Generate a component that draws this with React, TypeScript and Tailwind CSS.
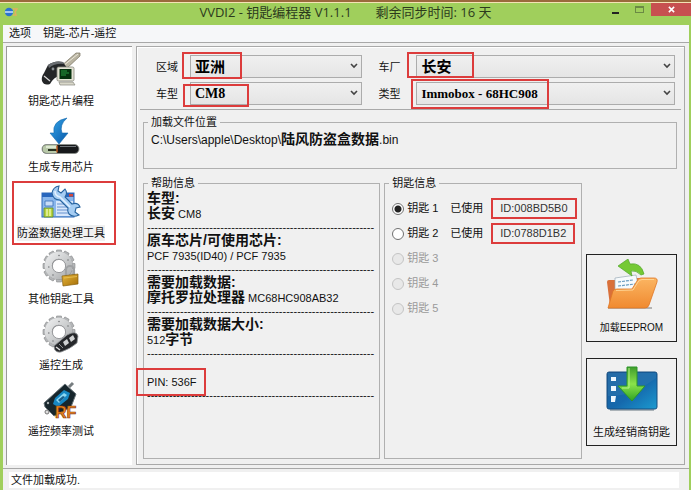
import { useState, type ReactNode } from "react";

const uiFont = "font-['Liberation_Sans','Noto_Sans_CJK_SC',sans-serif]";

function Gear() {
  const teeth = [0, 30, 60, 90, 120, 150, 180, 210, 240, 270, 300, 330];
  return (
    <g>
      <g fill="#b4b6b8" stroke="#888a8c" strokeWidth="0.6">
        {teeth.map((a) => (
          <path key={a} d="M14 5 L14.6 1 L19.4 1 L20 5 Z" transform={`rotate(${a} 17 17)`} />
        ))}
      </g>
      <circle cx="17" cy="17" r="10.3" fill="none" stroke="#8a8c8e" strokeWidth="7.2" />
      <circle cx="16.7" cy="16.7" r="10.4" fill="none" stroke="url(#steel)" strokeWidth="7" />
      <circle cx="17" cy="17" r="6.6" fill="#fff" stroke="#85878a" strokeWidth="0.8" />
      <g fill="#77797b">
        <circle cx="17" cy="6.5" r="0.8" />
        <circle cx="6.8" cy="18" r="0.8" />
        <circle cx="11" cy="26" r="0.8" />
        <circle cx="26" cy="11" r="0.8" />
      </g>
    </g>
  );
}

function SharedPaints() {
  return (
    <svg className="absolute size-0" aria-hidden="true">
      <defs>
        <linearGradient id="steel" x1="0" y1="0" x2="1" y2="1">
          <stop offset="0" stopColor="#e8e9ea" />
          <stop offset="0.5" stopColor="#cdcfd0" />
          <stop offset="1" stopColor="#acaeb0" />
        </linearGradient>
        <linearGradient id="blueArrow" x1="0" y1="0" x2="1" y2="1">
          <stop offset="0" stopColor="#35a7ea" />
          <stop offset="1" stopColor="#0757a8" />
        </linearGradient>
        <linearGradient id="orange" x1="0" y1="0" x2="0" y2="1">
          <stop offset="0" stopColor="#fbb562" />
          <stop offset="1" stopColor="#f08a30" />
        </linearGradient>
        <linearGradient id="green" x1="0" y1="0" x2="0" y2="1">
          <stop offset="0" stopColor="#3f9c2c" />
          <stop offset="0.5" stopColor="#8ae24a" />
          <stop offset="1" stopColor="#2fa324" />
        </linearGradient>
        <linearGradient id="screen" x1="0" y1="0" x2="1" y2="1">
          <stop offset="0" stopColor="#1c5a99" />
          <stop offset="0.55" stopColor="#1569ad" />
          <stop offset="1" stopColor="#1b9bd0" />
        </linearGradient>
        <linearGradient id="gold" x1="0" y1="0" x2="1" y2="1">
          <stop offset="0" stopColor="#e6b63c" />
          <stop offset="1" stopColor="#a66f08" />
        </linearGradient>
      </defs>
    </svg>
  );
}

const iconClass = "h-10 w-10";

function KeyChipIcon() {
  return (
    <svg viewBox="0 0 40 40" className={iconClass} aria-hidden="true">
      <path d="M19 17 L35 3 L39 3 L39 6 L24 20 Z" fill="#b9b4a2" stroke="#76705e" strokeWidth="0.7" />
      <path d="M22 16 L37 4" stroke="#ece8da" strokeWidth="1" />
      <path d="M7 15 Q14 10 22 12 L26 18 Q25 25 18 26 Q13 27 9 34 Q3 36 1 31 Q0 27 3 23 Z" fill="#242628" />
      <path d="M7 15 Q14 10 22 12 L23 14 Q14 13 8 18 Z" fill="#696d71" />
      <path d="M3 26 L9 31" stroke="#dcdcdc" strokeWidth="1.2" />
      <circle cx="12" cy="19" r="1.4" fill="#8b9094" />
      <rect x="16" y="17" width="17" height="14" rx="1.5" fill="#e4e3d5" stroke="#85857b" strokeWidth="0.8" />
      <rect x="18.5" y="19" width="12" height="10" fill="#06320f" />
      <path d="M20 21h6M20 23h8M20 25h5" stroke="#2da848" strokeWidth="0.9" />
      <path d="M18 32 h14 l2 3 h-15 Z" fill="#d9d8ca" stroke="#88887e" strokeWidth="0.7" />
    </svg>
  );
}

function ChipIcon() {
  return (
    <svg viewBox="0 0 40 40" className={iconClass} aria-hidden="true">
      <path d="M26 2 Q11 5 13 17 L9 17 L18 28 L27 17 L21 17 Q18 9 26 2 Z" fill="url(#blueArrow)" stroke="#1669ad" strokeWidth="0.6" />
      <rect x="1" y="28.5" width="37" height="9" rx="4.5" fill="#17191b" stroke="#8b918b" strokeWidth="0.8" />
      <path d="M5.5 29 H16 V37 H5.5 A4 4 0 0 1 5.5 29 Z" fill="#b8c8a8" />
      <path d="M5 31h10" stroke="#edf4e3" strokeWidth="1.5" />
      <path d="M7 34h10" stroke="#27301f" strokeWidth="2" />
      <path d="M16 29.5v7" stroke="#c75e23" strokeWidth="1.4" />
      <path d="M19 30.5h16" stroke="#71777b" strokeWidth="1" />
    </svg>
  );
}

function DataToolIcon() {
  return (
    <svg viewBox="0 0 40 40" className={iconClass} aria-hidden="true">
      <rect x="1" y="11" width="32" height="24" fill="#8bb7ec" stroke="#2f68b8" />
      <rect x="1" y="11" width="32" height="4" fill="#2866bd" />
      <rect x="28" y="12" width="4" height="2.5" fill="#d3483c" />
      <path d="M15 19h17v15H15z" fill="#d8e7fb" />
      <path d="M16 22h13M16 25h13M16 28h13M16 31h13" stroke="#6792cf" />
      <path d="M4 19h8v5H4z" fill="#c9ddf7" stroke="#3970b8" strokeWidth="0.8" />
      <path d="M3 26h9v9H3z" fill="#b8d33e" stroke="#5b8a2d" strokeWidth="0.8" />
      <path d="M6 27v7M9 27v7" stroke="#f6ffc3" strokeWidth="1.2" />
      <path
        d="M18 4 L17 9 L20 11 L24 7 Q27 11 24 15 L31 22 Q37 20 39 25 L35 26 L34 30 L38 33 Q32 36 28 32 Q26 29 27 26 L19 18 Q12 18 11 11 Q12 5 18 4 Z"
        fill="#a6cdf3"
        stroke="#28649f"
        strokeWidth="1.1"
      />
      <path d="M14 9 Q14 14 19 15 L29 25" fill="none" stroke="#e3f1ff" strokeWidth="1.5" />
    </svg>
  );
}

function GearLockIcon() {
  return (
    <svg viewBox="-1 -1 40 40" className={iconClass} aria-hidden="true">
      <Gear />
      <path d="M24 27 v-6 a4 4 0 0 1 8 0 v6" fill="none" stroke="#9fa1a3" strokeWidth="2.2" />
      <path d="M20 27 L36 25 V35 L21 37 Z" fill="url(#gold)" stroke="#87600e" strokeWidth="0.7" />
      <path d="M22 29 L35 27.5" stroke="#f0ca5c" strokeWidth="0.7" />
    </svg>
  );
}

function GearRemoteIcon() {
  return (
    <svg viewBox="-1 -1 40 40" className={iconClass} aria-hidden="true">
      <Gear />
      <path d="M12 31 L25 20 Q34 15 36 21 L35 28 Q28 34 19 37 Q12 38 12 31 Z" fill="#25272a" stroke="#929598" strokeWidth="0.8" />
      <path d="M21 27l4-3 2 4-4 3zM27 23l4-3 2 4-4 3z" fill="#d0d2d3" />
      <path d="M14 32l4 3" stroke="#dedede" strokeWidth="1.5" />
      <path d="M17 29l4 4" stroke="#8f9295" strokeWidth="1" />
    </svg>
  );
}

function FrequencyIcon() {
  return (
    <svg viewBox="0 0 40 40" className={iconClass} aria-hidden="true">
      <path d="M28 7 L32 3" stroke="#777d80" strokeWidth="3" />
      <path d="M3 23 L24 4 L35 14 L30 27 L13 36 L4 27 Z" fill="#17262c" stroke="#677277" strokeWidth="1" />
      <path d="M12 24 L14 18 L23 10 L29 13 L27 19 L17 27 Z" fill="#1687c3" />
      <path d="M15 20l8-7 3 2-8 8z" fill="#8bd8f3" />
      <path d="M17 20l5-4 2 1-5 5z" fill="#185f8c" />
      <circle cx="6" cy="32" r="2" fill="#ddd" stroke="#777" />
      <circle cx="7" cy="23" r="1.2" fill="#aab1b4" />
      <text x="14" y="38" fontFamily="Liberation Sans, sans-serif" fontWeight="700" fontSize="16" fill="#ed8b1e" stroke="#8a3508" strokeWidth="0.7">
        RF
      </text>
    </svg>
  );
}

function FolderIcon() {
  return (
    <svg viewBox="0 0 52 52" className="h-[52px] w-[52px]" aria-hidden="true">
      <path d="M2 49h44" stroke="#b4b4b4" strokeWidth="2" />
      <path d="M1 23 Q1 21 3 21 H10 L13 19 H41 V47 H4 Z" fill="#d9703a" />
      <path d="M9 19 L30 16 L34 34 H9 Z" fill="#f7fafc" stroke="#9aabb8" strokeWidth="0.7" />
      <path d="M12 23l15-2M12 27l17-2" stroke="#6c9dc0" strokeWidth="1.2" strokeDasharray="3 1" />
      <path d="M2 49 L7 32 Q8 30 11 30 L26 30 L31 22 Q32 19 35 19 H48 Q52 19 51 23 L43 46 Q42 49 39 49 Z" fill="url(#orange)" stroke="#df7624" strokeWidth="0.8" />
      <path d="M10 31.5 L27 31 L32 23 Q33 21 36 20.5 H48" fill="none" stroke="#ffd391" />
      <path d="M12 7 L22 0 L24 5 Q35 3 38 15 L35 16 Q30 11 25 12 L26 17 Z" fill="#75c935" stroke="#50a529" strokeWidth="0.7" />
    </svg>
  );
}

function DownloadIcon() {
  return (
    <svg viewBox="0 0 52 46" className="h-[46px] w-[52px]" aria-hidden="true">
      <path d="M4 44h44" stroke="#aab2b7" strokeWidth="2" />
      <rect x="1" y="6" width="50" height="37" rx="2" fill="url(#screen)" stroke="#174e80" />
      <path d="M2 30 Q25 31 50 12 V7 H2 Z" fill="#2b76af" opacity="0.6" />
      <path d="M5 11h5v4H5zM5 20h5v5H5zM5 30h5l-1 6H5z" fill="#eef7fd" />
      <path d="M21 1 H31 V20 H39 L26 35 L12 20 H21 Z" fill="url(#green)" stroke="#2c9529" />
      <path d="M23 2v20h-7" fill="none" stroke="#b7f38c" />
    </svg>
  );
}

const tools: { label: string; icon: ReactNode }[] = [
  { label: "钥匙芯片编程", icon: <KeyChipIcon /> },
  { label: "生成专用芯片", icon: <ChipIcon /> },
  { label: "防盗数据处理工具", icon: <DataToolIcon /> },
  { label: "其他钥匙工具", icon: <GearLockIcon /> },
  { label: "遥控生成", icon: <GearRemoteIcon /> },
  { label: "遥控频率测试", icon: <FrequencyIcon /> },
];

type ComboProps = {
  id: string;
  label: string;
  value: string;
  labelClass?: string;
  textClass: string;
  markClass: string;
};

function Combo({ id, label, value, labelClass, textClass, markClass }: ComboProps) {
  return (
    <>
      <label htmlFor={id} className={`text-[11px] leading-4 ${labelClass ?? ""}`}>
        {label}
      </label>
      <div className="relative h-[23px]">
        <select
          id={id}
          className={`block h-full w-full appearance-none border border-[#acacac] bg-linear-to-b from-[#f0f0f0] to-[#e5e5e5] pl-1 font-['Liberation_Serif','Noto_Sans_CJK_SC',serif] font-bold text-black ${textClass}`}
        >
          <option>{value}</option>
        </select>
        <svg viewBox="0 0 8 6" className="pointer-events-none absolute top-2 right-1 h-1.5 w-2" aria-hidden="true">
          <path d="M1 1l3 3 3-3" fill="none" stroke="#444" strokeWidth="1.6" />
        </svg>
        <span className={`pointer-events-none absolute border-2 border-[#dc3c3c] ${markClass}`} />
      </div>
    </>
  );
}

function Group({ title, children, className }: { title: string; children: ReactNode; className?: string }) {
  return (
    <fieldset className={`min-w-0 border border-[#b0b0b0] ${className ?? ""}`}>
      <legend className="ml-1 px-[3px] text-[11px] leading-3">{title}</legend>
      {children}
    </fieldset>
  );
}

function Latin({ children }: { children: ReactNode }) {
  return <span className="text-[11px] font-normal">{children}</span>;
}

function Line({ children }: { children?: ReactNode }) {
  return <p className="relative h-[15px] text-sm leading-[15px] font-bold whitespace-nowrap">{children}</p>;
}

function Rule() {
  return <p className="h-3 overflow-hidden text-[11px] leading-3 whitespace-nowrap">{"-".repeat(62)}</p>;
}

const keys: { n: number; id?: string }[] = [
  { n: 1, id: "ID:008BD5B0" },
  { n: 2, id: "ID:0788D1B2" },
  { n: 3 },
  { n: 4 },
  { n: 5 },
];

export default function App() {
  const [active, setActive] = useState(1);
  return (
    <div className={`flex min-h-screen flex-col border-t-2 border-t-[#9a6a3c] bg-[#a0cf5c] text-[#111] ${uiFont}`}>
      <SharedPaints />
      <div className="h-px bg-[#f3e3b4]" />
      <header className="relative flex h-[22px] items-center justify-center">
        <svg viewBox="0 0 14 10" className="absolute top-1 left-1 h-2.5 w-3.5" aria-hidden="true">
          <circle cx="5" cy="5" r="4.2" fill="#2c73cf" />
          <path d="M1 5h8" stroke="#d9ebff" strokeWidth="1.4" />
          <path d="M9 2h4l-2 3 1 3h-3" fill="none" stroke="#e1b060" strokeWidth="1.5" />
        </svg>
        <h1 className="flex gap-6 pb-1 text-[13px] leading-[18px] whitespace-nowrap text-[#2c3a1c] font-['Open_Sans','Noto_Sans_CJK_SC',sans-serif]">
          <span>VVDI2 - 钥匙编程器 V1.1.1</span>
          <span>剩余同步时间: 16 天</span>
        </h1>
        <div className="absolute top-0 right-0 flex h-[13px] items-stretch">
          <button type="button" aria-label="最小化" className="flex w-6 items-center justify-center">
            <span className="mt-1.5 h-0.5 w-[7px] bg-[#222]" />
          </button>
          <button type="button" aria-label="最大化" className="flex w-6 items-center justify-center">
            <span className="h-[7px] w-[9px] border border-t-2 border-[#6b8a44]" />
          </button>
          <button type="button" aria-label="关闭" className="flex w-10 items-center justify-center bg-[#c75050]">
            <svg viewBox="0 0 8 8" className="size-[7px]" aria-hidden="true">
              <path d="M1 1l6 6M7 1l-6 6" stroke="#fff" strokeWidth="1.8" />
            </svg>
          </button>
        </div>
      </header>

      <div className="mr-0.5 ml-[3px] flex flex-1 flex-col bg-[#f0f0f0]">
        <nav className="flex h-[18px] items-center gap-3 border-b border-[#a8a8a8] bg-[#f6f7f9] pl-1.5 text-[11px]">
          <button type="button">选项</button>
          <button type="button">钥匙-芯片-遥控</button>
        </nav>

        <div className="flex flex-1 gap-1 pt-[3px] pr-1 pl-[3px]">
          <aside className="w-[126px] shrink-0 border-t border-l border-[#9a9a9a] bg-white pt-[3px] pl-[5px]">
            {tools.map((tool, i) => (
              <button key={tool.label} type="button" className="relative flex h-[66px] w-[104px] flex-col items-center gap-[3px] pr-1.5 text-[11px] leading-4 whitespace-nowrap">
                {tool.icon}
                {i === 2 ? <span className="bg-[#f0f0f0]">{tool.label}</span> : <span>{tool.label}</span>}
                {i === 2 && <span className="pointer-events-none absolute inset-x-0 -top-px h-16 border-2 border-[#dc3c3c]" />}
              </button>
            ))}
          </aside>

          <main className="flex min-w-0 flex-1 flex-col border border-[#a9a9a9] px-[3px] pt-2 pb-[5px] shadow-[inset_1px_1px_0_#fff]">
            <div className="grid grid-cols-[34px_2fr_54px_3fr] items-center gap-y-1 border-b border-[#a9a9a9] pr-1.5 pb-1 pl-4">
              <Combo id="region" label="区域" value="亚洲" textClass="text-[15px]" markClass="-top-[3px] -left-2 h-[27px] w-[60px]" />
              <Combo id="maker" label="车厂" value="长安" labelClass="pl-4" textClass="text-[15px]" markClass="-top-[3px] -left-[9px] h-[26px] w-[67px]" />
              <Combo id="model" label="车型" value="CM8" textClass="text-sm" markClass="top-0.5 -left-[7px] h-[23px] w-[66px]" />
              <Combo id="type" label="类型" value="Immobox - 68HC908" labelClass="pl-4" textClass="text-[13px]" markClass="-top-[3px] -left-[5px] h-[30px] w-[138px]" />
            </div>

            <div className="flex flex-1 flex-col gap-2 pt-1.5 pr-1 pl-[3px]">
              <Group title="加载文件位置" className="h-[53px]">
                <p className="mt-1 h-3.5 pl-[7px] text-xs leading-3.5 whitespace-nowrap">
                  C:\Users\apple\Desktop\<span className="text-sm leading-3.5 font-bold">陆风防盗盒数据</span>.bin
                </p>
              </Group>

              <div className="grid flex-1 grid-cols-[6fr_5fr_91px] gap-1">
                <Group title="帮助信息">
                  <div className="pt-0.5 pl-[3px]">
                    <Line>车型:</Line>
                    <Line>长安<Latin> CM8</Latin></Line>
                    <Rule />
                    <Line>原车芯片/可使用芯片:</Line>
                    <Line><Latin>PCF 7935(ID40) / PCF 7935</Latin></Line>
                    <Rule />
                    <Line>需要加载数据:</Line>
                    <Line>摩托罗拉处理器<Latin> MC68HC908AB32</Latin></Line>
                    <Rule />
                    <Line>需要加载数据大小:</Line>
                    <Line><Latin>512</Latin>字节</Line>
                    <Rule />
                    <Line />
                    <Line>
                      <Latin>PIN: 536F</Latin>
                      <span className="pointer-events-none absolute -top-1.5 -left-[11px] h-7 w-[70px] border-2 border-[#dc3c3c]" />
                    </Line>
                    <Rule />
                  </div>
                </Group>

                <Group title="钥匙信息">
                  <div className="pt-[7px] pl-[7px] text-[11px]">
                    {keys.map((k) => (
                      <div key={k.n} className="flex h-[25px] items-center whitespace-nowrap">
                        <label className={`flex w-[58px] items-center gap-[3px] ${k.id ? "text-[#111]" : "text-[#9a9a9a]"}`}>
                          <input
                            type="radio"
                            name="key"
                            disabled={!k.id}
                            checked={active === k.n}
                            onChange={() => setActive(k.n)}
                            className="size-3 shrink-0 appearance-none rounded-full border border-[#707070] bg-white checked:bg-[radial-gradient(circle,#222_0_3px,#fff_4px)] disabled:border-[#c4c4c4] disabled:bg-[#e8e8e8]"
                          />
                          钥匙 {k.n}
                        </label>
                        {k.id && (
                          <>
                            <span>已使用</span>
                            <output className="ml-2 flex h-[21px] items-center border-2 border-[#dc3c3c] px-[7px] text-[#333]">{k.id}</output>
                          </>
                        )}
                      </div>
                    ))}
                  </div>
                </Group>

                <div className="flex flex-col justify-end gap-4 pb-[13px] text-[11px]">
                  <button type="button" className="flex h-[88px] flex-col items-center justify-between border border-[#222] pt-1 pb-[5px]">
                    <FolderIcon />
                    <span className="text-[10px] leading-4">加载EEPROM</span>
                  </button>
                  <button type="button" className="flex h-[88px] flex-col items-center justify-between border border-[#222] pt-[7px] pb-[5px]">
                    <DownloadIcon />
                    <span className="leading-4">生成经销商钥匙</span>
                  </button>
                </div>
              </div>
            </div>
          </main>
        </div>

        <footer className="mt-[3px] border-t border-[#a8a8a8] px-1.5 pt-[3px] pb-0.5">
          <p className="mr-1 h-4 bg-white pl-0.5 text-[11px] leading-4">文件加载成功.</p>
        </footer>
      </div>
    </div>
  );
}
